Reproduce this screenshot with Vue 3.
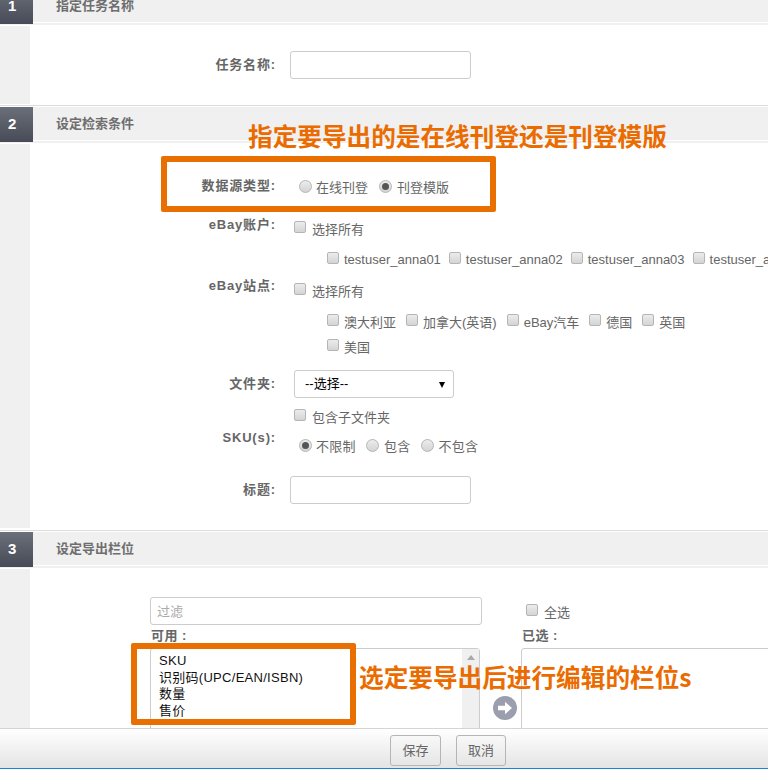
<script setup>
const accounts = ['testuser_anna01', 'testuser_anna02', 'testuser_anna03', 'testuser_anna04']
const sites = ['澳大利亚', '加拿大(英语)', 'eBay汽车', '德国', '英国', '美国']
const fields = ['SKU', '识别码(UPC/EAN/ISBN)', '数量', '售价']
</script>

<template>
  <div class="page">
    <div class="flow">
      <section class="section">
        <header class="head">
          <div class="num">1</div>
          <div class="title">指定任务名称</div>
        </header>
        <div class="body body-1">
          <div class="rail"></div>
          <div class="content pad-1">
            <div class="row h28">
              <label class="label">任务名称:</label>
              <input class="input" type="text" />
            </div>
          </div>
        </div>
      </section>

      <section class="section">
        <header class="head">
          <div class="num">2</div>
          <div class="title">设定检索条件</div>
        </header>
        <div class="body body-2">
          <div class="rail"></div>
          <div class="content">
            <div class="row h28 r-type">
              <label class="label">数据源类型:</label>
              <div class="field radios indent">
                <span class="opt"><i class="radio"></i>在线刊登</span>
                <span class="opt wide"><i class="radio on"></i>刊登模版</span>
              </div>
            </div>

            <div class="row r-account">
              <label class="label lh22">eBay账户:</label>
              <div class="field pt3">
                <span class="opt line"><i class="check"></i>选择所有</span>
                <div class="sub nowrap">
                  <span v-for="a in accounts" :key="a" class="opt line"><i class="check"></i>{{ a }}</span>
                </div>
              </div>
            </div>

            <div class="row r-site">
              <label class="label lh22">eBay站点:</label>
              <div class="field pt4">
                <span class="opt line"><i class="check"></i>选择所有</span>
                <div class="sub wrap">
                  <span v-for="s in sites" :key="s" class="opt line"><i class="check"></i>{{ s }}</span>
                </div>
              </div>
            </div>

            <div class="row h28 r-folder">
              <label class="label">文件夹:</label>
              <div class="field">
                <div class="select">--选择--<i class="caret"></i></div>
              </div>
            </div>

            <div class="row r-sku">
              <label class="label lh22 sku-label">SKU(s):</label>
              <div class="field">
                <span class="opt line"><i class="check"></i>包含子文件夹</span>
                <div class="sku-radios">
                  <span class="opt line first"><i class="radio on"></i>不限制</span>
                  <span class="opt line"><i class="radio"></i>包含</span>
                  <span class="opt line"><i class="radio"></i>不包含</span>
                </div>
              </div>
            </div>

            <div class="row h28 r-title">
              <label class="label">标题:</label>
              <input class="input" type="text" />
            </div>
          </div>
        </div>
      </section>

      <section class="section">
        <header class="head">
          <div class="num">3</div>
          <div class="title">设定导出栏位</div>
        </header>
        <div class="body body-3">
          <div class="rail"></div>
          <div class="content columns">
            <input class="input filter" type="text" placeholder="过滤" />
            <span class="opt all"><i class="check"></i>全选</span>
            <div class="col-label">可用 :</div>
            <div class="col-label selected">已选 :</div>
            <div class="list">
              <div class="items">
                <div v-for="f in fields" :key="f">{{ f }}</div>
              </div>
              <div class="scroll"><i class="up"></i></div>
            </div>
            <div class="mover">
              <svg width="24" height="24" viewBox="0 0 24 24">
                <circle cx="12" cy="12" r="12" fill="#9a9eae" />
                <path d="M5 9.8h7V5.8l7 6.2-7 6.2v-4H5z" fill="#fff" />
              </svg>
            </div>
            <div class="list chosen"></div>
          </div>
        </div>
      </section>
    </div>

    <div class="note note-a">指定要导出的是在线刊登还是刊登模版</div>
    <div class="frame frame-a"></div>
    <div class="frame frame-b"></div>
    <div class="note note-b">选定要导出后进行编辑的栏位s</div>

    <footer class="footer">
      <button class="btn save">保存</button>
      <button class="btn cancel">取消</button>
    </footer>
  </div>
</template>

<style>
html, body { margin: 0; background: #fff; }
</style>

<style scoped>
.page {
  position: relative;
  width: 768px;
  height: 769px;
  overflow: hidden;
  background: #fff;
  font-family: "Liberation Sans", "Noto Sans CJK SC", sans-serif;
  font-size: 13px;
  color: #666;
}
.flow { margin-top: -13px; }
.section { border-top: 1px solid #ddd; }
.head {
  display: flex;
  height: 36px;
  margin: 1px 0;
  background: #f0f0f0;
}
.num {
  width: 33px;
  height: 35px;
  padding-left: 8px;
  box-sizing: border-box;
  background: linear-gradient(#6b6f79, #474b57);
  color: #fff;
  font-size: 15px;
  font-weight: bold;
  line-height: 34px;
}
.title {
  flex: 1;
  height: 33px;
  padding-left: 23px;
  border-bottom: 1px solid #fff;
  font-weight: bold;
  line-height: 33px;
  color: #6e6e6e;
}
.body { display: flex; }
.body-1 { height: 78px; margin-bottom: 1px; }
.body-2 { height: 384px; margin-bottom: 2px; }
.body-3 { height: 200px; }
.rail { width: 30px; flex: none; background: #f0f0f0; }
.content { flex: 1; min-width: 0; }
.pad-1 { padding-top: 25px; }
.row { display: flex; }
.h28 { height: 28px; align-items: center; }
.h28 .label { margin-bottom: 3px; }
.label {
  width: 246px;
  flex: none;
  text-align: right;
  font-weight: bold;
  letter-spacing: 0.85px;
  color: #666;
  margin-right: 18px;
}
.lh22 { line-height: 22px; }
.input {
  width: 181px;
  height: 28px;
  margin-left: -4px;
  box-sizing: border-box;
  border: 1px solid #ccc;
  border-radius: 3px;
  background: #fff;
  outline: none;
}
.field { min-width: 0; flex: 1; }
.opt { display: inline-flex; align-items: center; white-space: nowrap; }
.line { display: flex; height: 22px; }
.check, .radio {
  flex: none;
  box-sizing: border-box;
  background: linear-gradient(#ececec, #d4d4d4);
  border: 1px solid #b5b5b5;
}
.check {
  width: 12px;
  height: 12px;
  margin-right: 6px;
  margin-top: -3px;
  border-radius: 2px;
}
.radio {
  width: 13px;
  height: 13px;
  margin-right: 5px;
  border-radius: 50%;
  position: relative;
}
.radio.on::after {
  content: "";
  position: absolute;
  left: 2px;
  top: 2px;
  width: 7px;
  height: 7px;
  border-radius: 50%;
  background: #555;
}
.indent { padding-left: 5px; }
.radios { display: flex; gap: 11px; }
.radios .opt:first-child .radio { margin-right: 4px; }
.r-type { margin-top: 28px; }
.r-account { margin-top: 14px; }
.pt3 { padding-top: 3px; }
.pt4 { padding-top: 4px; }
.sub { margin-left: 33px; margin-top: 9px; display: flex; }
.sub .check { margin-right: 5px; }
.nowrap { flex-wrap: nowrap; gap: 8px; }
.wrap { flex-wrap: wrap; width: 375px; gap: 3px 10px; }
.r-site { margin-top: 5px; }
.r-folder { margin-top: 13px; }
.select {
  position: relative;
  width: 160px;
  height: 28px;
  box-sizing: border-box;
  padding-left: 10px;
  border: 1px solid #ccc;
  border-radius: 3px;
  line-height: 26px;
  color: #000;
}
.caret {
  position: absolute;
  right: 8px;
  top: 11px;
  border-left: 3.5px solid transparent;
  border-right: 3.5px solid transparent;
  border-top: 6px solid #000;
}
.r-sku { margin-top: 7px; }
.sku-label { margin-top: 22px; }
.sku-radios { display: flex; gap: 10px; margin: 7px 0 0 5px; letter-spacing: 0.3px; }
.sku-radios .first .radio { margin-right: 4px; }
.r-title { margin-top: 20px; }
.columns {
  display: grid;
  grid-template-columns: 330px 41px 1fr;
  grid-template-rows: 28px 23px 120px;
  padding: 28px 0 0 120px;
}
.filter {
  grid-column: 1 / 3;
  width: 332px;
  margin: 0;
  padding: 0 6px;
  font: inherit;
}
.filter::placeholder { color: #aaa; }
.all { grid-column: 3; margin-left: 5px; }
.all .check { margin-top: -2px; }
.col-label {
  grid-column: 1 / 3;
  padding-left: 1px;
  font-weight: bold;
  line-height: 22px;
  letter-spacing: 0.5px;
}
.selected { grid-column: 3; }
.list {
  display: flex;
  box-sizing: border-box;
  height: 120px;
  border: 1px solid #ccc;
  border-radius: 3px;
}
.chosen { width: 300px; }
.items {
  flex: 1;
  padding: 4px 0 0 8px;
  line-height: 16.7px;
  letter-spacing: 0.28px;
  color: #111;
}
.scroll {
  position: relative;
  width: 17px;
  background: #f0f0f0;
}
.up {
  position: absolute;
  left: 5px;
  top: 6px;
  border-left: 4px solid transparent;
  border-right: 4px solid transparent;
  border-bottom: 5px solid #aaa;
}
.mover { padding: 48px 0 0 13px; }
.frame {
  position: absolute;
  box-sizing: border-box;
  border: 6px solid #e86f00;
  border-radius: 2px;
}
.frame-a { left: 161px; top: 156px; width: 335px; height: 56px; }
.frame-b { left: 131px; top: 643px; width: 225px; height: 82px; }
.note {
  position: absolute;
  color: #ea6c00;
  white-space: nowrap;
  font-family: "Noto Sans CJK SC", sans-serif;
  font-weight: 700;
  font-size: 24.65px;
  line-height: 36px;
}
.note-a { left: 248px; top: 117px; }
.note-b { left: 359px; top: 658px; }
.footer {
  position: absolute;
  left: 0;
  right: 0;
  bottom: 0;
  height: 41px;
  box-sizing: border-box;
  display: flex;
  align-items: flex-start;
  gap: 15px;
  padding: 6px 0 0 390px;
  border-top: 1px solid #d5d5d5;
  border-bottom: 1px solid #1a85d6;
  background: linear-gradient(#fff, #e4e4e4);
}
.btn {
  height: 31px;
  padding: 0 0 2px;
  border: 1px solid #b5b5b5;
  border-radius: 3px;
  background: linear-gradient(#f8f8f8, #e6e6e6);
  color: #666;
  font: inherit;
}
.save { width: 51px; }
.cancel { width: 50px; }
</style>
